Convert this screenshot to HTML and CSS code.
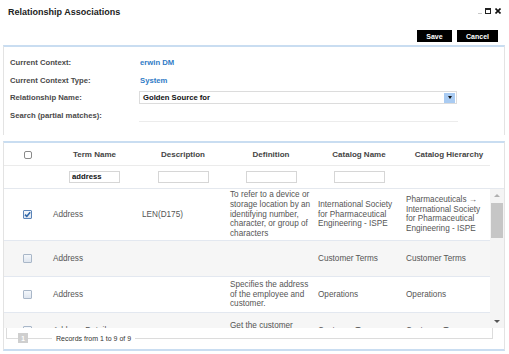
FILE: index.html
```html
<!DOCTYPE html>
<html lang="en">

<head>
    <meta charset="UTF-8">
    <title>Relationship Associations</title>
    <link rel="stylesheet" href="styles.css">
</head>

<body>
    <div class="titlebar">
        <h1>Relationship Associations</h1>
        <div class="win-icons">
            <span class="win-min"></span>
            <span class="win-max"></span>
            <svg class="win-close" width="6" height="6" viewBox="0 0 6 6">
                <path d="M0.5 0.5 L5.5 5.5 M5.5 0.5 L0.5 5.5" stroke="#111" stroke-width="1.6" />
            </svg>
        </div>
    </div>

    <div class="actions">
        <button class="btn btn-save">Save</button>
        <button class="btn btn-cancel">Cancel</button>
    </div>

    <section class="context-panel">
        <div class="field">
            <label>Current Context:</label>
            <span class="value">erwin DM</span>
        </div>
        <div class="field">
            <label>Current Context Type:</label>
            <span class="value">System</span>
        </div>
        <div class="field">
            <label>Relationship Name:</label>
            <div class="select">
                <span>Golden Source for</span>
                <span class="select-btn"><span class="caret"></span></span>
            </div>
        </div>
        <div class="field">
            <label>Search (partial matches):</label>
            <div class="search"></div>
        </div>
    </section>

    <section class="results-panel">
        <div class="grid-head">
            <div class="cell-check"><span class="cb cb-head"></span></div>
            <div class="head-cell">Term Name</div>
            <div class="head-cell">Description</div>
            <div class="head-cell">Definition</div>
            <div class="head-cell">Catalog Name</div>
            <div class="head-cell">Catalog Hierarchy</div>
        </div>

        <div class="grid-filter">
            <div></div>
            <div class="filter-cell"><input class="filter" value="address"></div>
            <div class="filter-cell"><input class="filter"></div>
            <div class="filter-cell"><input class="filter"></div>
            <div class="filter-cell"><input class="filter"></div>
            <div></div>
        </div>

        <div class="grid-body">
            <div class="rows">
                <div class="row">
                    <div class="cell-check"><span class="cb checked">
                        <svg width="7" height="7" viewBox="0 0 7 7"><path d="M1 3.6 L2.8 5.4 L6.2 1.2" fill="none" stroke="#2f66a8" stroke-width="1.6" /></svg>
                    </span></div>
                    <div class="cell">Address</div>
                    <div class="cell">LEN(D175)</div>
                    <div class="cell">To refer to a device or<br>storage location by an<br>identifying number,<br>character, or group of<br>characters</div>
                    <div class="cell">International Society<br>for Pharmaceutical<br>Engineering - ISPE</div>
                    <div class="cell">Pharmaceuticals &rarr;<br>International Society<br>for Pharmaceutical<br>Engineering - ISPE</div>
                </div>
                <div class="row alt">
                    <div class="cell-check"><span class="cb"></span></div>
                    <div class="cell">Address</div>
                    <div class="cell"></div>
                    <div class="cell"></div>
                    <div class="cell">Customer Terms</div>
                    <div class="cell">Customer Terms</div>
                </div>
                <div class="row">
                    <div class="cell-check"><span class="cb"></span></div>
                    <div class="cell">Address</div>
                    <div class="cell"></div>
                    <div class="cell">Specifies the address<br>of the employee and<br>customer.</div>
                    <div class="cell">Operations</div>
                    <div class="cell">Operations</div>
                </div>
                <div class="row alt">
                    <div class="cell-check"><span class="cb"></span></div>
                    <div class="cell">Address Details</div>
                    <div class="cell"></div>
                    <div class="cell">Get the customer<br>address details.</div>
                    <div class="cell">Customer Terms</div>
                    <div class="cell">Customer Terms</div>
                </div>
            </div>
            <div class="scrollbar">
                <div class="scroll-arrow"><span class="arrow-up"></span></div>
                <div class="scroll-thumb"></div>
                <div class="scroll-track"></div>
                <div class="scroll-arrow"><span class="arrow-down"></span></div>
            </div>
        </div>

        <div class="pager">
            <div class="pager-frame">
                <div class="pager-bar">
                    <span class="page-num">1</span>
                    <span class="records">Records from 1 to 9 of 9</span>
                </div>
            </div>
        </div>
    </section>
</body>

</html>
```

FILE: styles.css
```css
* {
    box-sizing: border-box;
}

body {
    margin: 0;
    width: 509px;
    height: 354px;
    overflow: hidden;
    background-color: #fff;
    color: #555;
    font-family: "Liberation Sans", Arial, sans-serif;
}

/* title bar */
.titlebar {
    height: 24px;
    display: flex;
    align-items: center;
    justify-content: space-between;
    padding: 0 8px;
}

.titlebar h1 {
    margin: 0;
    font-size: 9px;
    font-weight: bold;
    color: #222;
}

.win-icons {
    display: flex;
    align-items: center;
    gap: 3px;
    margin-top: -3px;
}

.win-min {
    width: 4px;
    height: 1px;
    margin-top: 5px;
    background-color: #c8c8c8;
}

.win-max {
    width: 6px;
    height: 6px;
    border: 1px solid #222;
    border-top-width: 2px;
}

.win-close {
    margin-left: 1px;
}

/* buttons */
.actions {
    display: flex;
    justify-content: flex-end;
    gap: 5px;
    margin: 6px 11px 3px 0;
}

.btn {
    height: 12px;
    padding: 0;
    border: none;
    background-color: #000;
    color: #fff;
    font-family: "Liberation Sans", Arial, sans-serif;
    font-size: 7px;
    font-weight: bold;
}

.btn-save {
    width: 35px;
}

.btn-cancel {
    width: 41px;
}

/* context panel */
.context-panel {
    margin: 0 4px 0 3px;
    padding: 7px 0 10.6px 6px;
    border-top: 2px solid #c9ddf1;
    border-left: 1px solid #e3e3e3;
    border-right: 1px solid #e3e3e3;
}

.field {
    display: flex;
    align-items: center;
    height: 17.6px;
}

.field label {
    width: 129px;
    font-size: 7.7px;
    font-weight: bold;
    color: #4a4a4a;
}

.value {
    padding-left: 1px;
    font-size: 7.7px;
    font-weight: bold;
    color: #2f7bc6;
}

.select {
    width: 318px;
    height: 13px;
    display: flex;
    align-items: center;
    justify-content: space-between;
    padding: 0 1px 0 3px;
    border: 1px solid #dcdcdc;
    font-size: 7.7px;
    font-weight: bold;
    color: #111;
}

.select-btn {
    width: 11px;
    height: 10px;
    display: flex;
    align-items: center;
    justify-content: center;
    background-color: #a9cbf2;
}

.caret {
    border-left: 2.5px solid transparent;
    border-right: 2.5px solid transparent;
    border-top: 3px solid #111;
}

.search {
    width: 319px;
    height: 13px;
    border-bottom: 1px solid #ececec;
}

/* results panel */
.results-panel {
    margin: 6px 4px 0 3px;
    border-top: 2px solid #c9ddf1;
    border-bottom: 2px solid #c9ddf1;
    border-left: 1px solid #e3e3e3;
    border-right: 1px solid #e3e3e3;
}

.grid-head,
.grid-filter,
.row {
    display: grid;
    grid-template-columns: 41px 89px 88px 88px 88px 92px;
}

.grid-head {
    height: 23px;
    margin-right: 14px;
    padding-top: 2px;
    align-items: center;
    border-bottom: 1px solid #ebebeb;
}

.head-cell {
    padding-left: 10px;
    text-align: center;
    font-size: 8px;
    font-weight: bold;
    color: #444;
}

.cell-check {
    display: flex;
    justify-content: center;
    padding-left: 6px;
}

.cb {
    width: 9px;
    height: 9px;
    display: flex;
    align-items: center;
    justify-content: center;
    border: 1px solid #a9b7c8;
    border-radius: 1px;
    background: linear-gradient(#f4f7fb, #dfe6ef);
}

.cb-head {
    width: 8px;
    height: 8px;
    border-color: #8a8a8a;
    border-radius: 2px;
    background: #fff;
}

.cb.checked {
    border-color: #5b84b8;
}

.grid-filter {
    height: 23px;
    align-items: center;
    border-bottom: 1px solid #e4e8ee;
}

.filter-cell {
    display: flex;
    justify-content: center;
    padding-left: 10px;
}

.filter {
    width: 51px;
    height: 12px;
    padding: 0 2px;
    border: 1px solid #d6d6d6;
    font-family: "Liberation Sans", Arial, sans-serif;
    font-size: 7.7px;
    font-weight: bold;
    color: #111;
    outline: none;
}

/* body rows */
.grid-body {
    display: flex;
    height: 139px;
    overflow: hidden;
}

.rows {
    width: 486px;
}

.row {
    min-height: 36px;
    align-items: center;
    border-bottom: 1px solid #e3e8f0;
}

.row.alt {
    background-color: #f6f6f6;
}

.cell {
    padding: 1px 0 1px 8px;
    font-size: 8.2px;
    line-height: 9.8px;
    color: #555;
    white-space: nowrap;
}

.scrollbar {
    width: 14px;
    display: flex;
    flex-direction: column;
    align-items: center;
    background-color: #f4f4f4;
}

.scroll-arrow {
    width: 100%;
    height: 13px;
    display: flex;
    align-items: center;
    justify-content: center;
}

.arrow-up {
    border-left: 3px solid transparent;
    border-right: 3px solid transparent;
    border-bottom: 3px solid #b0b0b0;
}

.arrow-down {
    border-left: 3px solid transparent;
    border-right: 3px solid transparent;
    border-top: 3px solid #555;
}

.scroll-thumb {
    width: 12px;
    height: 35px;
    margin-top: 1px;
    background-color: #c6c6c6;
}

.scroll-track {
    flex: 1;
}

/* pager */
.pager {
    height: 21px;
    padding: 0 11px 0 2px;
}

.pager-frame {
    height: 11px;
    display: flex;
    align-items: flex-end;
    border: 1px solid #dcdcdc;
    border-top: none;
}

.pager-bar {
    height: 11px;
    margin-bottom: -6px;
    display: flex;
    align-items: center;
}

.page-num {
    width: 10px;
    height: 10px;
    margin-left: 11px;
    display: flex;
    align-items: center;
    justify-content: center;
    background-color: #cfcfcf;
    color: #fff;
    font-size: 6.5px;
    font-weight: bold;
}

.records {
    margin-left: 24px;
    padding: 0 4px;
    background-color: #fff;
    font-size: 7px;
    color: #333;
}
```
